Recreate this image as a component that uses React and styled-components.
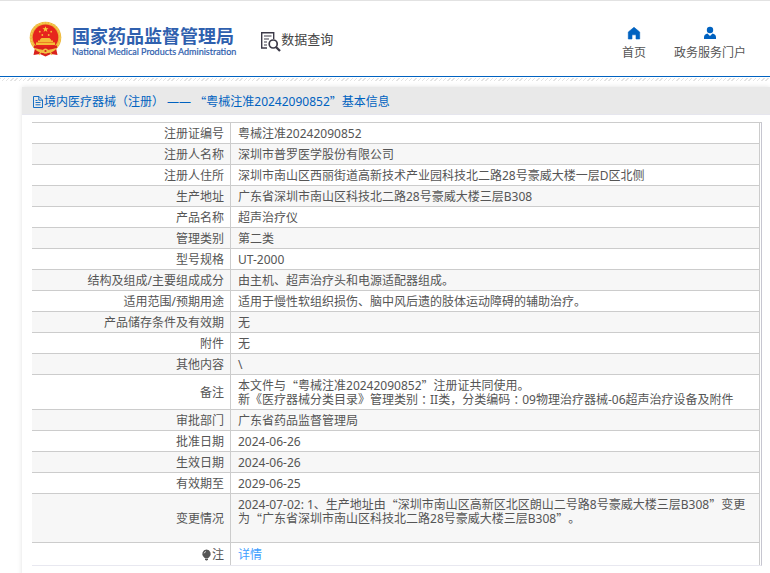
import React from "react";
import styled, { createGlobalStyle } from "styled-components";

const GlobalStyle = createGlobalStyle`
  * { box-sizing: border-box; }
  html, body { margin: 0; background: #fff; }
  body {
    overflow: hidden;
    color: #555;
    font: 12px/14px "Noto Sans", "Noto Sans CJK SC", sans-serif;
    text-spacing-trim: space-all;
  }
`;

const Header = styled.header`
  display: flex;
  align-items: flex-start;
  height: 77px;
  padding: 20px 24px 0 28px;
  border-top: 1px solid #e2e2e2;
  border-bottom: 1px solid #0062c0;
`;

const HatchRule = styled.div`
  height: 3px;
  margin: 1px 0 6px;
  background: repeating-linear-gradient(135deg, #e3e3e3 0 1px, #fff 1px 3px);
`;

const Brand = styled.a`
  display: flex;
  align-items: flex-start;
  gap: 9px;
  color: #2f60ae;
  text-decoration: none;
`;

const BrandText = styled.span`
  display: flex;
  flex-direction: column;
  padding-top: 4px;
  white-space: nowrap;
`;

const BrandName = styled.strong`
  font: 700 18px/20px "Noto Sans CJK SC", sans-serif;
`;

const BrandEnglish = styled.span`
  padding-top: 1px;
  font: 400 9px/12px Lato, sans-serif;
  -webkit-text-stroke: 0.2px;
`;

const Query = styled.div`
  display: flex;
  align-items: flex-start;
  margin: 10px 0 0 24px;
  color: #444;
  font-size: 13px;
  line-height: 17px;
  white-space: nowrap;
`;

const Nav = styled.nav`
  display: flex;
  gap: 28px;
  margin: 5px 0 0 auto;
`;

const NavLink = styled.a`
  display: flex;
  flex-direction: column;
  align-items: center;
  gap: 6px;
  color: #555;
  text-decoration: none;
  white-space: nowrap;
`;

const Panel = styled.main`
  margin-left: 22px;
  min-height: 490px;
  background: #fff;
  box-shadow: 0 0 5px rgba(0, 0, 0, 0.12);
`;

const Title = styled.h1`
  display: flex;
  align-items: center;
  margin: 0;
  height: 28px;
  padding: 2px 10px 0;
  background: #e9e9e9;
  border-bottom: 1px solid #e6e6ee;
  color: #0062c0;
  font-size: 12px;
  font-weight: 400;
  white-space: pre;
`;

const TableFrame = styled.div`
  margin: 7px 8px 0 10px;
  padding-right: 1px;
  border-top: 1px solid #ccc;
  border-right: 1px solid #c6c6d0;
  border-bottom: 1px solid #e8e8f0;
`;

const Table = styled.table`
  width: 100%;
  border-collapse: separate;
  border-spacing: 0;
  border-right: 1px solid #ccc;
`;

const Row = styled.tr`
  &:nth-child(even) { background: #f7f7f7; }
  & + & > * { border-top: 1px solid #ccc; }
`;

const Label = styled.th`
  width: 199px;
  padding: 4px 6px 2px 0;
  border-right: 1px solid #ccc;
  font-weight: 400;
  text-align: right;
`;

const Value = styled.td`
  height: ${(p) => (p.$tall ? "49px" : "auto")};
  padding: 4px 8px 2px 7px;
  vertical-align: ${(p) => (p.$tall ? "top" : "middle")};
  white-space: pre-line;
`;

const NoteLabel = styled.span`
  display: inline-flex;
  align-items: center;
  padding: 1px 0;
  vertical-align: top;
`;

const DetailLink = styled.a`
  color: #409eff;
  text-decoration: none;
`;

const WideMark = styled.span`
  display: inline-block;
  line-height: 14px;
  vertical-align: top;
  font-family: ${(p) => (p.$centered ? '"Noto Sans CJK TC"' : '"Noto Sans CJK SC"')}, sans-serif;
`;

const withWideMarks = (text) =>
  text.split(/([“”：])/).map((part, i) =>
    /^[“”：]$/.test(part) ? (
      <WideMark key={i} $centered={part === "："}>{part}</WideMark>
    ) : (
      part
    )
  );

const Emblem = () => (
  <svg width="35" height="36" viewBox="0 0 35 36" aria-hidden="true">
    <path d="M7 27 L5.5 34 L12 33 L17.5 35.5 L23 33 L29.5 34 L28 27Z" fill="#d9211c" />
    <circle cx="17.5" cy="16.5" r="15.8" fill="#eeb63c" />
    <circle cx="17.5" cy="16.5" r="14.6" fill="none" stroke="#f6d65c" strokeWidth="1" strokeDasharray="2 1" />
    <circle cx="17.5" cy="16.2" r="12.8" fill="#e6251d" />
    <path d="M17.5 5.2l.8 2.1h2.2l-1.8 1.4.7 2.2-1.9-1.3-1.9 1.3.7-2.2-1.8-1.4h2.2z" fill="#f8cf3d" />
    <g fill="#f5bd37">
      <circle cx="11.8" cy="10.7" r=".9" />
      <circle cx="23.2" cy="10.7" r=".9" />
      <circle cx="14.3" cy="14" r=".9" />
      <circle cx="20.7" cy="14" r=".9" />
      <path d="M12 18.5l1.5-1.5h8l1.5 1.5v1h2V21h2v3H8v-3h2v-1.5h2z" />
    </g>
    <path d="M8 21.5h19" stroke="#e8641d" strokeWidth=".7" />
    <path d="M6 25.5q11.5 4 23 0" fill="none" stroke="#d9211c" strokeWidth="2.4" />
    <path d="M9 29q8.5 3 17 0M11 34l2.5-4M24 34l-2.5-4" fill="none" stroke="#f2c144" strokeWidth="1.2" />
    <circle cx="17.5" cy="30" r="2.6" fill="#f2c144" />
    <circle cx="17.5" cy="30" r="1.1" fill="#d9211c" />
  </svg>
);

const QueryIcon = () => (
  <svg width="21" height="21" viewBox="0 0 21 21" fill="none" stroke="#3c3a48" aria-hidden="true">
    <path d="M7 17H1.7V1.7h12V8" strokeWidth="1.4" />
    <path d="M4 5h7.5M4 8h5M4 11h3M4 14h3" strokeWidth="1.1" />
    <circle cx="13.2" cy="13" r="4" strokeWidth="1.7" />
    <path d="M16 16l4 4" strokeWidth="2.3" />
  </svg>
);

const HomeIcon = () => (
  <svg width="14" height="14" viewBox="0 0 14 14" aria-hidden="true">
    <path d="M7 1.3L1.3 6V13H5V8.8h4V13h3.7V6z" fill="#0062c0" stroke="#0062c0" strokeWidth=".6" strokeLinejoin="round" />
  </svg>
);

const UserIcon = () => (
  <svg width="14" height="14" viewBox="0 0 14 14" fill="#0062c0" aria-hidden="true">
    <circle cx="7" cy="4" r="3.2" />
    <path d="M1 13v-1.8C1 9 2.5 8 4.5 7.6L7 10l2.5-2.4C11.5 8 13 9 13 11.2V13z" />
  </svg>
);

const DocIcon = () => (
  <svg width="12" height="12" viewBox="0 0 12 12" fill="none" stroke="#0062c0" strokeWidth=".9" aria-hidden="true">
    <path d="M1.5.5H7L10.500 4v7.500h-9zM6.800.5v3.700h3.700M3.500 4.500h2M3.500 6.500h5M3.500 8.800h5" />
  </svg>
);

const BulbIcon = () => (
  <svg width="11" height="12" viewBox="0 0 11 12" fill="#555" aria-hidden="true">
    <path d="M5.5.6a4.3 4.3 0 0 1 2.8 7.5L7.3 9H3.7l-1-.9A4.3 4.3 0 0 1 5.5.6z" />
    <path d="M4 9.6h3v1l-1 1H5l-1-1z" />
    <path d="M3.2 4.3q.3-1.5 1.8-1.8" fill="none" stroke="#fff" strokeWidth=".7" />
  </svg>
);

const rows = [
  ["注册证编号", "粤械注准20242090852"],
  ["注册人名称", "深圳市普罗医学股份有限公司"],
  ["注册人住所", "深圳市南山区西丽街道高新技术产业园科技北二路28号豪威大楼一层D区北侧"],
  ["生产地址", "广东省深圳市南山区科技北二路28号豪威大楼三层B308"],
  ["产品名称", "超声治疗仪"],
  ["管理类别", "第二类"],
  ["型号规格", "UT-2000"],
  ["结构及组成/主要组成成分", "由主机、超声治疗头和电源适配器组成。"],
  ["适用范围/预期用途", "适用于慢性软组织损伤、脑中风后遗的肢体运动障碍的辅助治疗。"],
  ["产品储存条件及有效期", "无"],
  ["附件", "无"],
  ["其他内容", "\\"],
  ["备注", "本文件与“粤械注准20242090852”注册证共同使用。\n新《医疗器械分类目录》管理类别：II类，分类编码：09物理治疗器械-06超声治疗设备及附件"],
  ["审批部门", "广东省药品监督管理局"],
  ["批准日期", "2024-06-26"],
  ["生效日期", "2024-06-26"],
  ["有效期至", "2029-06-25"],
  ["变更情况", "2024-07-02: 1、生产地址由“深圳市南山区高新区北区朗山二号路8号豪威大楼三层B308”变更为“广东省深圳市南山区科技北二路28号豪威大楼三层B308”。", true],
];

export default function App() {
  return (
    <>
      <GlobalStyle />
      <Header>
        <Brand href="#">
          <Emblem />
          <BrandText>
            <BrandName>国家药品监督管理局</BrandName>
            <BrandEnglish>National Medical Products Administration</BrandEnglish>
          </BrandText>
        </Brand>
        <Query>
          <QueryIcon />
          数据查询
        </Query>
        <Nav>
          <NavLink href="#"><HomeIcon />首页</NavLink>
          <NavLink href="#"><UserIcon />政务服务门户</NavLink>
        </Nav>
      </Header>
      <HatchRule />
      <Panel>
        <Title>
          <DocIcon />
          <span>境内医疗器械（注册） —— {withWideMarks("“粤械注准20242090852”")}基本信息</span>
        </Title>
        <TableFrame>
          <Table>
            <tbody>
              {rows.map(([label, value, tall]) => (
                <Row key={label}>
                  <Label scope="row">{label}</Label>
                  <Value $tall={tall}>{withWideMarks(value)}</Value>
                </Row>
              ))}
              <Row>
                <Label scope="row"><NoteLabel><BulbIcon />注</NoteLabel></Label>
                <Value><DetailLink href="#">详情</DetailLink></Value>
              </Row>
            </tbody>
          </Table>
        </TableFrame>
      </Panel>
    </>
  );
}
